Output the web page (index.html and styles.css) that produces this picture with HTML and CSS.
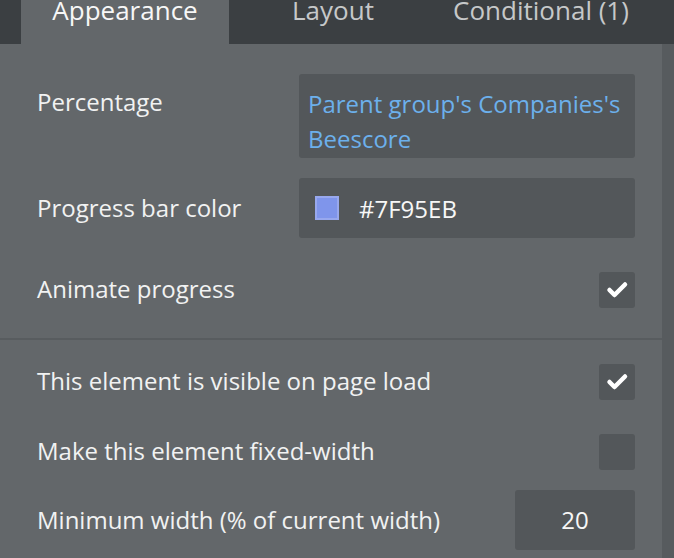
FILE: index.html
```html
<!DOCTYPE html>
<html lang="en">
<head>
<meta charset="utf-8">
<title>Progress bar properties</title>
<link rel="stylesheet" href="styles.css">
</head>
<body>
<div class="app">
  <nav class="tabs">
    <div class="tab active">Appearance</div>
    <div class="tab">Layout</div>
    <div class="tab">Conditional (1)</div>
  </nav>
  <div class="body">
    <main class="panel">
      <section class="section top">
        <div class="row row-text">
          <div class="label label-top">Percentage</div>
          <div class="field field-dynamic">Parent group's Companies's Beescore</div>
        </div>
        <div class="row row-color">
          <div class="label">Progress bar color</div>
          <div class="field field-color">
            <span class="swatch"></span>
            <span class="hex">#7F95EB</span>
          </div>
        </div>
        <div class="row row-check">
          <div class="label">Animate progress</div>
          <div class="checkbox">
            <svg viewBox="0 0 36 36" width="36" height="36"><polyline points="10.5,18 15.5,23 26,12.5" fill="none" stroke="#ffffff" stroke-width="4.5" stroke-linecap="round" stroke-linejoin="round"/></svg>
          </div>
        </div>
      </section>
      <section class="section bottom">
        <div class="row row-check first">
          <div class="label">This element is visible on page load</div>
          <div class="checkbox">
            <svg viewBox="0 0 36 36" width="36" height="36"><polyline points="10.5,18 15.5,23 26,12.5" fill="none" stroke="#ffffff" stroke-width="4.5" stroke-linecap="round" stroke-linejoin="round"/></svg>
          </div>
        </div>
        <div class="row row-check">
          <div class="label">Make this element fixed-width</div>
          <div class="checkbox"></div>
        </div>
        <div class="row row-number">
          <div class="label">Minimum width (% of current width)</div>
          <div class="field field-number">20</div>
        </div>
      </section>
    </main>
    <div class="scrollbar"></div>
  </div>
</div>
</body>
</html>
```

FILE: styles.css
```css
html, body {
  margin: 0;
  padding: 0;
  height: 100%;
  overflow: hidden;
  background: #63676a;
}

.app {
  display: flex;
  flex-direction: column;
  height: 558px;
  font-family: "Open Sans", "Noto Sans", sans-serif;
  color: #f1f2f2;
}

.tabs {
  display: flex;
  align-items: flex-start;
  height: 44px;
  padding-left: 21px;
  background: #3b3f42;
  flex-shrink: 0;
}

.tab {
  width: 208px;
  height: 44px;
  text-align: center;
  font-size: 26px;
  line-height: 20px;
  color: #c6c8c9;
}

.tab.active {
  background: #63676a;
  color: #f7f7f7;
}

.body {
  display: flex;
  flex: 1;
  min-height: 0;
}

.panel {
  flex: 1;
  min-width: 0;
}

.scrollbar {
  width: 12px;
  background: #575b5e;
}

.section {
  padding: 0 27px 0 37px;
}

.section.top {
  padding-top: 30px;
  padding-bottom: 30px;
  border-bottom: 2px solid #585c5f;
}

.section.bottom {
  padding-top: 24px;
}

.row {
  display: flex;
  align-items: center;
  justify-content: space-between;
}

.label {
  font-size: 24px;
  line-height: 32px;
  white-space: nowrap;
}

.row-check .label {
  padding-bottom: 3px;
}

.row-text {
  align-items: flex-start;
}

.label-top {
  padding-top: 12px;
}

.field {
  background: #53575a;
  border-radius: 3px;
  box-sizing: border-box;
}

.field-dynamic {
  width: 336px;
  height: 84px;
  padding: 12px 9px 0;
  font-size: 24px;
  line-height: 35px;
  color: #6cb0ec;
}

.row-color {
  margin-top: 20px;
}

.field-color {
  width: 336px;
  height: 60px;
  display: flex;
  align-items: center;
  gap: 20px;
  padding-left: 16px;
  font-size: 24px;
  color: #f7f7f7;
}

.swatch {
  width: 24px;
  height: 24px;
  box-sizing: border-box;
  background: #7f95eb;
  border: 2px solid #98a8ee;
}

.row-check {
  margin-top: 34px;
}

.row-check.first {
  margin-top: 0;
}

.checkbox {
  width: 36px;
  height: 36px;
  border-radius: 3px;
  background: #53575a;
  flex-shrink: 0;
}

.checkbox svg {
  display: block;
}

.row-number {
  margin-top: 20px;
}

.field-number {
  width: 120px;
  height: 60px;
  line-height: 60px;
  text-align: center;
  font-size: 24px;
  color: #f7f7f7;
}
```
